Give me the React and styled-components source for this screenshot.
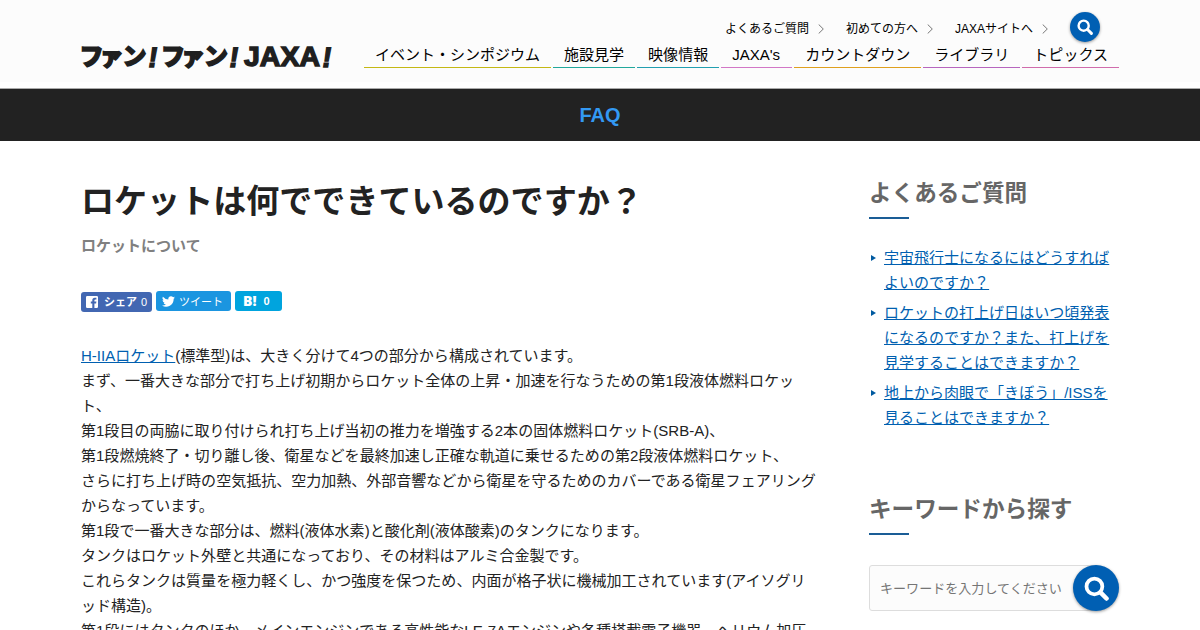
import React from "react";
import styled, { createGlobalStyle } from "styled-components";

const GlobalStyle = createGlobalStyle`
  * {
    box-sizing: border-box;
  }
  html {
    overflow: hidden;
  }
  body {
    margin: 0;
    height: 630px;
    overflow: hidden;
    background: #fff;
    color: #222;
    font-family: "Liberation Sans", "Noto Sans CJK JP", sans-serif;
    font-size: 15.03px;
    line-height: 25px;
  }
  h1, h2, p, ul {
    margin: 0;
    padding: 0;
  }
  a {
    color: #005fb0;
  }
`;

const subLinks = ["よくあるご質問", "初めての方へ", "JAXAサイトへ"];

const navLinks = [
  { label: "イベント・シンポジウム", color: "#c4b814" },
  { label: "施設見学", color: "#22a89c" },
  { label: "映像情報", color: "#229fb0" },
  { label: "JAXA's", color: "#d277c6" },
  { label: "カウントダウン", color: "#dfa01e" },
  { label: "ライブラリ", color: "#b766be" },
  { label: "トピックス", color: "#d06cac" },
];

const paragraphs = [
  "まず、一番大きな部分で打ち上げ初期からロケット全体の上昇・加速を行なうための第1段液体燃料ロケット、",
  "第1段目の両脇に取り付けられ打ち上げ当初の推力を増強する2本の固体燃料ロケット(SRB-A)、",
  "第1段燃焼終了・切り離し後、衛星などを最終加速し正確な軌道に乗せるための第2段液体燃料ロケット、",
  "さらに打ち上げ時の空気抵抗、空力加熱、外部音響などから衛星を守るためのカバーである衛星フェアリングからなっています。",
  "第1段で一番大きな部分は、燃料(液体水素)と酸化剤(液体酸素)のタンクになります。",
  "タンクはロケット外壁と共通になっており、その材料はアルミ合金製です。",
  "これらタンクは質量を極力軽くし、かつ強度を保つため、内面が格子状に機械加工されています(アイソグリッド構造)。",
  "第1段にはタンクのほか、メインエンジンである高性能なLE-7Aエンジンや各種搭載電子機器、ヘリウム加圧",
];

const faqs = [
  "宇宙飛行士になるにはどうすればよいのですか？",
  "ロケットの打上げ日はいつ頃発表になるのですか？また、打上げを見学することはできますか？",
  "地上から肉眼で「きぼう」/ISSを見ることはできますか？",
];

const SearchIcon = ({ size }) => (
  <svg width={size} height={size} viewBox="0 0 24 24" fill="none" stroke="#fff">
    <circle cx="10" cy="10" r="7.6" strokeWidth="3.6" />
    <path d="M15.8 15.8L21.6 21.6" strokeWidth="4.4" strokeLinecap="round" />
  </svg>
);

const Bang = ({ x }) => (
  <LatinText transform={`translate(${x} 24) skewX(-9)`}>!</LatinText>
);

const Logo = () => (
  <svg width="254" height="36" viewBox="0 -4 254 36">
    <LogoText>
      <text x="-1.5 18.5 41.5" y="22">ファン</text>
      <Bang x={66} />
      <text x="80 100 123" y="22">ファン</text>
      <Bang x={147} />
      <LatinText x="163" y="23" textLength="76" lengthAdjust="spacingAndGlyphs">
        JAXA
      </LatinText>
      <Bang x={240} />
    </LogoText>
  </svg>
);

const App = () => {
  return (
    <>
      <GlobalStyle />
      <Header>
        <LogoLink>
          <Logo />
        </LogoLink>
        <HeaderMenus>
          <SubNav>
            {subLinks.map((label) => (
              <SubLink key={label}>
                {label}
                <svg width="6" height="10" viewBox="0 0 6 10" fill="none" stroke="#777">
                  <path d="M0.7 0.5L5.3 5L0.7 9.5" />
                </svg>
              </SubLink>
            ))}
            <RoundButton $size={30}>
              <SearchIcon size={16} />
            </RoundButton>
          </SubNav>
          <MainNav>
            {navLinks.map(({ label, color }) => (
              <NavLink key={label} $color={color}>
                {label}
              </NavLink>
            ))}
          </MainNav>
        </HeaderMenus>
      </Header>
      <Category>FAQ</Category>
      <Main>
        <Article>
          <h1>ロケットは何でできているのですか？</h1>
          <Genre>ロケットについて</Genre>
          <Shares>
            <FacebookButton>
              <svg width="12" height="12" viewBox="0 0 12 12">
                <path
                  fill="#fff"
                  d="M1.2 0h9.6A1.2 1.2 0 0 1 12 1.2v9.6A1.2 1.2 0 0 1 10.8 12H8.4V7.4h1.7l.3-1.9h-2V4.3c0-.6.3-.9 1-.9h1V1.7H8.8C7.1 1.7 6.3 2.7 6.3 4.2V5.5H4.8v1.9h1.5V12H1.2A1.2 1.2 0 0 1 0 10.8V1.2A1.2 1.2 0 0 1 1.2 0z"
                />
              </svg>
              <b>シェア</b>
              <span>0</span>
            </FacebookButton>
            <TwitterButton>
              <svg width="13" height="11" viewBox="0 2 24 20">
                <path
                  fill="#fff"
                  d="M24 4.6a10 10 0 0 1-2.8.8 4.9 4.9 0 0 0 2.1-2.7 9.9 9.9 0 0 1-3.1 1.2 4.9 4.9 0 0 0-8.4 4.5A14 14 0 0 1 1.7 3.2a4.9 4.9 0 0 0 1.5 6.5 4.9 4.9 0 0 1-2.2-.6v.1a4.9 4.9 0 0 0 3.9 4.8 5 5 0 0 1-2.2.1 4.9 4.9 0 0 0 4.6 3.4A9.9 9.9 0 0 1 0 19.5a14 14 0 0 0 21.5-12.4A10 10 0 0 0 24 4.6z"
                />
              </svg>
              <span>ツイート</span>
            </TwitterButton>
            <HatenaButton>
              <strong>B!</strong>
              <b>0</b>
            </HatenaButton>
          </Shares>
          <p>
            <a href="#rocket">H-IIAロケット</a>
            (標準型)は、大きく分けて4つの部分から構成されています。
          </p>
          {paragraphs.map((text) => (
            <p key={text}>{text}</p>
          ))}
        </Article>
        <Sidebar>
          <SideTitle>よくあるご質問</SideTitle>
          <FaqList>
            {faqs.map((text) => (
              <li key={text}>
                <a href="#faq">{text}</a>
              </li>
            ))}
          </FaqList>
          <SideTitle>キーワードから探す</SideTitle>
          <SearchForm>
            <input placeholder="キーワードを入力してください" />
            <RoundButton $size={46}>
              <SearchIcon size={25} />
            </RoundButton>
          </SearchForm>
        </Sidebar>
      </Main>
    </>
  );
};

const Header = styled.header`
  display: flex;
  justify-content: space-between;
  height: 89px;
  padding: 0 81px;
  background: linear-gradient(#fcfcfc 82px, #fff 82px);
  border-bottom: 1px solid #aaa;
`;

const LogoLink = styled.div`
  padding-top: 39px;
  svg {
    display: block;
    overflow: visible;
  }
`;

const LogoText = styled.g`
  fill: #1f1f1f;
  stroke: #1f1f1f;
  stroke-width: 1.4px;
  font-family: "Noto Sans CJK JP", sans-serif;
  font-size: 24px;
  font-weight: 900;
`;

const LatinText = styled.text`
  font-family: "Liberation Sans", sans-serif;
  font-size: 28px;
`;

const HeaderMenus = styled.div`
  display: flex;
  flex-direction: column;
  padding-top: 12px;
`;

const SubNav = styled.div`
  display: flex;
  justify-content: flex-end;
  height: 30px;
  margin-right: 19px;
`;

const SubLink = styled.span`
  display: flex;
  align-items: center;
  gap: 9px;
  height: 34px;
  margin-right: 22px;
  color: #000;
  font-size: 12px;
  white-space: nowrap;
`;

const RoundButton = styled.button`
  display: flex;
  flex: none;
  align-items: center;
  justify-content: center;
  width: ${({ $size }) => $size}px;
  height: ${({ $size }) => $size}px;
  padding: 0;
  border: 0;
  border-radius: 50%;
  background: #005fb3;
  box-shadow: 0 1px 3px rgba(0, 0, 0, 0.4);
`;

const MainNav = styled.nav`
  display: flex;
  gap: 2px;
`;

const NavLink = styled.span`
  min-width: 71px;
  height: 26px;
  padding: 0 11px;
  border-bottom: 1px solid ${({ $color }) => $color};
  color: #000;
  line-height: 26px;
  white-space: nowrap;
`;

const Category = styled.div`
  height: 52px;
  background: #222;
  color: #3399f3;
  font-size: 20px;
  font-weight: bold;
  line-height: 52px;
  text-align: center;
`;

const Main = styled.main`
  display: flex;
  justify-content: space-between;
  padding: 0 81px;
`;

const Article = styled.article`
  width: 738px;
  padding-top: 36px;
  h1 {
    font-size: 33.06px;
    line-height: 50px;
  }
`;

const Genre = styled.p`
  margin-top: 6px;
  color: #808080;
  font-weight: bold;
`;

const Shares = styled.div`
  display: flex;
  gap: 4px;
  height: 20px;
  margin: 33px 0 32px;
`;

const ShareButton = styled.div`
  display: flex;
  align-items: center;
  height: 20px;
  border-radius: 3px;
  color: #fff;
  font-size: 11px;
  line-height: 20px;
  white-space: nowrap;
`;

const FacebookButton = styled(ShareButton)`
  width: 71px;
  margin-top: 1px;
  padding-left: 5px;
  background: #4267b2;
  b {
    margin: 0 4px 0 6px;
  }
`;

const TwitterButton = styled(ShareButton)`
  gap: 4px;
  width: 75px;
  padding-left: 6px;
  background: #1b95e0;
  span {
    padding-top: 1px;
  }
`;

const HatenaButton = styled(ShareButton)`
  gap: 7px;
  width: 47px;
  padding-left: 8px;
  background: #00a4de;
  strong {
    font-family: "Open Sans", "Liberation Sans", sans-serif;
    font-size: 14px;
    font-weight: 800;
  }
`;

const Sidebar = styled.aside`
  width: 250px;
  padding-top: 35px;
`;

const SideTitle = styled.h2`
  color: #666;
  font-size: 22.6px;
  line-height: 36px;
  &::after {
    content: "";
    display: block;
    width: 40px;
    height: 2px;
    margin-top: 5px;
    background: #1a5d96;
  }
`;

const FaqList = styled.ul`
  margin: 26px 0 62px;
  list-style: none;
  li {
    display: flex;
    margin-bottom: 5px;
  }
  li::before {
    content: "";
    flex: none;
    margin: 10px 8px 0 2px;
    border: solid transparent;
    border-width: 3px 0 3px 5px;
    border-left-color: #005aa0;
    align-self: flex-start;
  }
`;

const SearchForm = styled.form`
  display: flex;
  height: 46px;
  margin-top: 30px;
  input {
    flex: 1;
    min-width: 0;
    margin-right: -23px;
    padding: 0 10px;
    border: 1px solid #ddd;
    border-radius: 3px;
    background: #fcfcfc;
    font: 13.06px "Liberation Sans", "Noto Sans CJK JP", sans-serif;
  }
  input::placeholder {
    color: #757575;
  }
  button {
    z-index: 1;
  }
`;

export default App;
